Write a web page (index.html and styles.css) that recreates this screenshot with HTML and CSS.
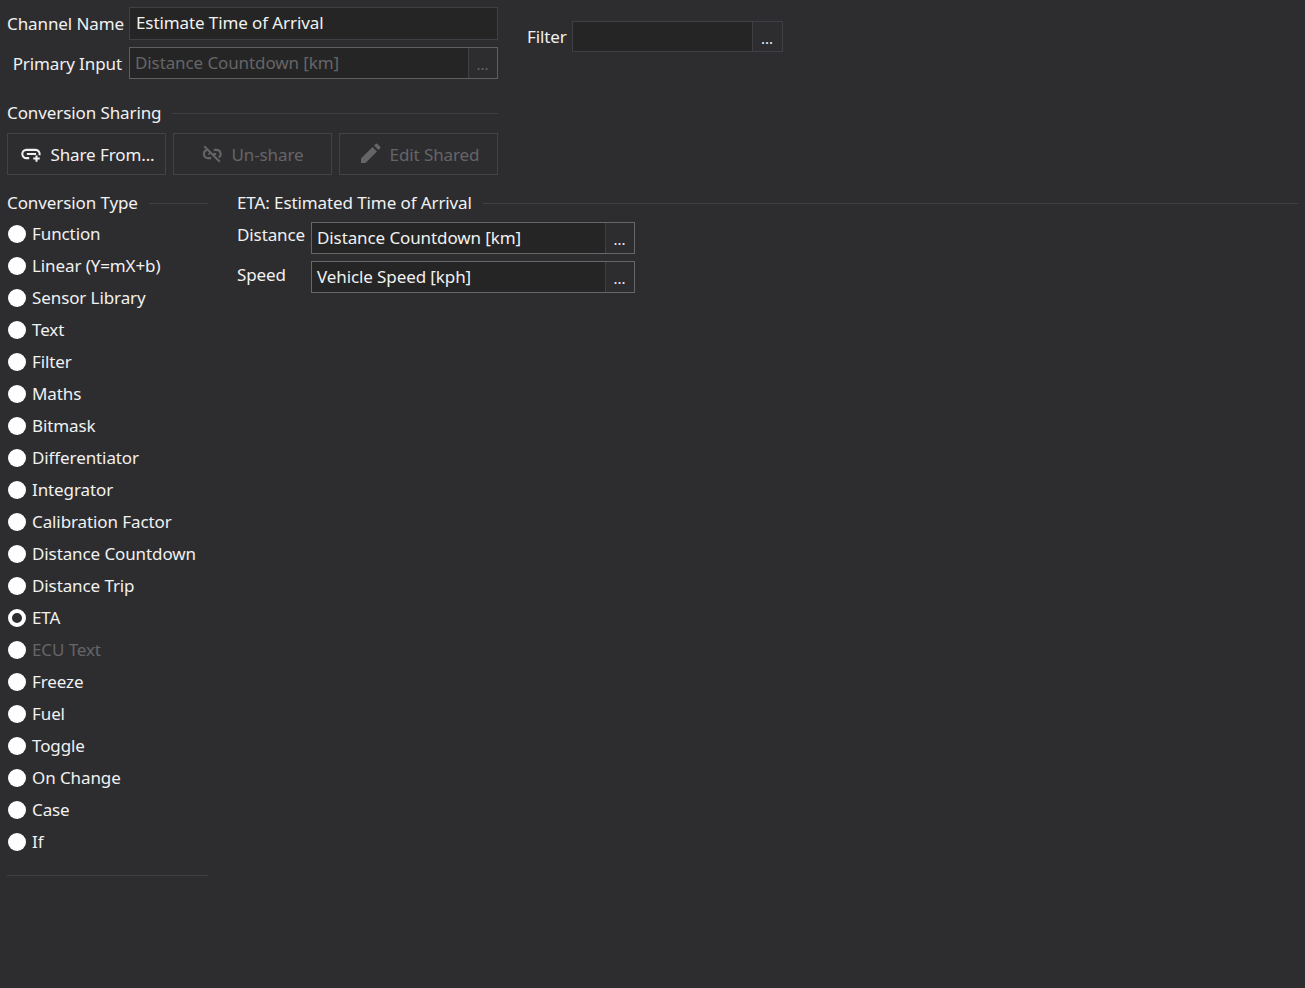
FILE: index.html
```html
<!DOCTYPE html>
<html lang="en">
<head>
<meta charset="utf-8">
<title>Channel conversion</title>
<link rel="stylesheet" href="styles.css">
</head>
<body>
<div class="top">
  <div class="main-fields">
    <div class="field-row row-name">
      <label class="label label-right">Channel Name</label>
      <div class="box box-name"><span class="value">Estimate Time of Arrival</span></div>
    </div>
    <div class="field-row row-primary">
      <label class="label label-right">Primary Input</label>
      <div class="box box-primary is-disabled">
        <span class="value">Distance Countdown [km]</span>
        <span class="dots">...</span>
      </div>
    </div>
  </div>
  <div class="filter-field">
    <label class="label filter-label">Filter</label>
    <div class="box box-filter">
      <span class="value"></span>
      <span class="dots">...</span>
    </div>
  </div>
</div>

<div class="sharing">
  <div class="heading"><span>Conversion Sharing</span><i class="rule"></i></div>
  <div class="buttons">
    <button class="btn btn-share">
      <svg class="icon" viewBox="0 0 24 24" width="22" height="22"><path fill="none" stroke="currentColor" stroke-width="2.2" d="M10 16.500H7a4.500 4.500 0 0 1 0-9h10a4.500 4.500 0 0 1 4.300 5.800M7.500 12h10"/><path fill="none" stroke="currentColor" stroke-width="2.2" d="M18 13.500v7M14.500 17h7"/></svg>
      <span>Share From...</span>
    </button>
    <button class="btn is-off">
      <svg class="icon" viewBox="0 0 24 24" width="22" height="22"><path fill="none" stroke="currentColor" stroke-width="2.2" d="M6.500 7.700a4.500 4.500 0 0 0 .5 8.800h4M14 7.500h3a4.500 4.500 0 0 1 2.500 8.200M8 12h1.500M13.500 12h3M3.500 3.500l17 17"/></svg>
      <span>Un-share</span>
    </button>
    <button class="btn is-off">
      <svg class="icon" viewBox="0 0 24 24" width="24" height="24"><path fill="currentColor" d="M3 21v-4.500L14.500 5l4.500 4.500L7.500 21zM16 3.500 17.500 2a1.400 1.400 0 0 1 2 0L22 4.500a1.400 1.400 0 0 1 0 2L20.500 8z"/></svg>
      <span>Edit Shared</span>
    </button>
  </div>
</div>

<div class="lower">
  <div class="types">
    <div class="heading"><span>Conversion Type</span><i class="rule"></i></div>
    <ul class="radio-list">
      <li class="radio">Function</li>
      <li class="radio">Linear (Y=mX+b)</li>
      <li class="radio">Sensor Library</li>
      <li class="radio">Text</li>
      <li class="radio">Filter</li>
      <li class="radio">Maths</li>
      <li class="radio">Bitmask</li>
      <li class="radio">Differentiator</li>
      <li class="radio">Integrator</li>
      <li class="radio">Calibration Factor</li>
      <li class="radio">Distance Countdown</li>
      <li class="radio">Distance Trip</li>
      <li class="radio is-checked">ETA</li>
      <li class="radio is-dim">ECU Text</li>
      <li class="radio">Freeze</li>
      <li class="radio">Fuel</li>
      <li class="radio">Toggle</li>
      <li class="radio">On Change</li>
      <li class="radio">Case</li>
      <li class="radio">If</li>
    </ul>
    <div class="end-rule"></div>
  </div>
  <div class="detail">
    <div class="heading"><span>ETA: Estimated Time of Arrival</span><i class="rule"></i></div>
    <div class="detail-row">
      <label class="label detail-label">Distance</label>
      <div class="box box-detail"><span class="value">Distance Countdown [km]</span><span class="dots">...</span></div>
    </div>
    <div class="detail-row">
      <label class="label detail-label detail-label-low">Speed</label>
      <div class="box box-detail"><span class="value">Vehicle Speed [kph]</span><span class="dots">...</span></div>
    </div>
  </div>
</div>
</body>
</html>
```
FILE: styles.css
```css
*, *::before { box-sizing: border-box; }
html, body { height: 100%; }
body {
  margin: 0;
  padding: 7px 7px 0;
  background: #2d2d30;
  color: #f1f1f1;
  font-family: "Noto Sans", "Open Sans", sans-serif;
  font-size: 17px;
  letter-spacing: -0.1px;
  line-height: 24px;
  overflow: hidden;
}
.top { display: flex; height: 72px; }
.main-fields { width: 491px; display: flex; flex-direction: column; gap: 7px; }
.field-row { display: flex; align-items: center; }
.row-name { height: 33px; }
.row-primary { height: 32px; }
.label { display: block; white-space: nowrap; }
.label-right { width: 115px; margin-right: 7px; text-align: right; }
.row-primary .label-right { padding-top: 2px; }
.box {
  display: flex;
  align-items: stretch;
  height: 100%;
  background: #252526;
  border: 1px solid #3f3f46;
  min-width: 0;
}
.box-name, .box-primary { width: 369px; }
.box-name .value { padding-left: 6px; }
.box-primary { border-color: #5f5f63; }
.value { flex: 1; padding-left: 5px; white-space: nowrap; line-height: 29px; }
.dots {
  width: 29px;
  flex: none;
  background: #2d2d30;
  text-align: center;
  line-height: 33px;
  font-size: 15px;
  letter-spacing: 0;
  box-shadow: inset 1px 0 0 #3f3f46;
}
.box-filter .dots { width: 30px; }
.is-disabled { color: #656567; }
.filter-field {
  display: flex;
  align-items: center;
  margin: 14px 0 0 29px;
  height: 31px;
}
.filter-label { width: 45px; }
.box-filter { width: 211px; }
.sharing { margin-top: 22px; width: 491px; }
.heading { display: flex; align-items: center; height: 24px; gap: 11px; white-space: nowrap; }
.rule { flex: 1; height: 1px; background: #3f3f46; }
.buttons { display: flex; gap: 7px; margin-top: 8px; width: 491px; }
.btn {
  flex: none;
  width: 159px;
  height: 42px;
  display: flex;
  align-items: center;
  justify-content: center;
  gap: 8px;
  padding: 2px 0 0;
  background: transparent;
  border: 1px solid #434346;
  color: #f1f1f1;
  font: inherit;
  letter-spacing: inherit;
}
.btn-share { padding-left: 2px; }
.icon { margin-top: -2px; }
.is-off { color: #656567; }
.lower { display: flex; margin-top: 16px; gap: 29px; }
.types { width: 201px; flex: none; }
.radio-list { list-style: none; margin: 3px 0 0; padding: 0; }
.radio {
  position: relative;
  height: 32px;
  padding-left: 25px;
  line-height: 32px;
  white-space: nowrap;
}
.radio::before {
  content: "";
  position: absolute;
  left: 1px;
  top: 7px;
  width: 18px;
  height: 18px;
  border-radius: 50%;
  background: #fff;
}
.is-checked::before { background: #2d2d30; border: 4px solid #fff; }
.is-dim { color: #656567; }
.end-rule { height: 1px; background: #3f3f46; margin-top: 17px; }
.detail { flex: 1; }
.detail-row { display: flex; height: 32px; margin-top: 7px; }
.detail-label { width: 74px; flex: none; line-height: 26px; }
.detail-label-low { line-height: 28px; }
.box-detail { width: 324px; border-color: #67676a; }
.box-detail .value { line-height: 30px; }
```
